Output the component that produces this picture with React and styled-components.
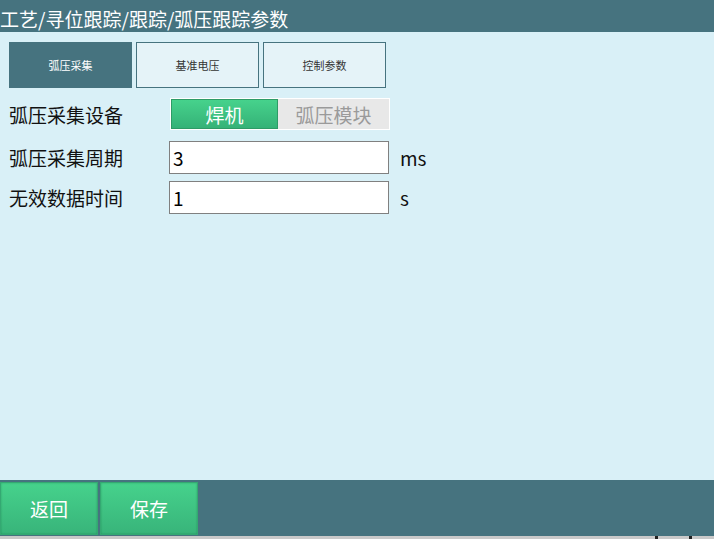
import React from "react";
import styled, { createGlobalStyle } from "styled-components";

const GlobalStyle = createGlobalStyle`
    html, body {
        margin: 0;
        padding: 0;
        background: #d9f0f7;
    }
    body {
        font-family: "Noto Sans CJK SC", "Microsoft YaHei", sans-serif;
    }
`;

const Page = styled.div`
    display: flex;
    flex-direction: column;
    width: 714px;
    height: 539px;
    overflow: hidden;
    background: #d9f0f7;
`;

const Header = styled.div`
    height: 32px;
    flex: none;
    display: flex;
    align-items: center;
    background: #46737f;
    color: #fff;
    font-size: 19px;
    line-height: 1;
    padding-top: 4px;
    box-sizing: border-box;
    white-space: nowrap;
`;

const Main = styled.div`
    flex: 1;
    padding: 10px 9px 0;
`;

const Tabs = styled.div`
    display: flex;
    gap: 4px;
`;

const Tab = styled.div`
    width: 123px;
    height: 46px;
    box-sizing: border-box;
    display: flex;
    align-items: center;
    justify-content: center;
    font-size: 11px;
    background: ${p => (p.active ? "#46737f" : "#e5f3f8")};
    color: ${p => (p.active ? "#fff" : "#333")};
    border: 1px solid #46737f;
`;

const Row = styled.div`
    display: flex;
    align-items: center;
    height: ${p => p.h}px;
    margin-top: ${p => p.top}px;
`;

const Label = styled.div`
    width: 160px;
    flex: none;
    font-size: 19px;
    color: #111;
`;

const Segment = styled.div`
    display: flex;
    width: 220px;
    height: 32px;
    box-sizing: border-box;
    border: 1px solid #fff;
    background: #fff;
    margin-left: 1px;
`;

const SegItem = styled.div`
    flex: ${p => (p.on ? "0 0 107px" : "1")};
    display: flex;
    align-items: center;
    justify-content: center;
    font-size: 19px;
    box-sizing: border-box;
    color: ${p => (p.on ? "#fff" : "#9a9a9a")};
    background: ${p => (p.on ? "linear-gradient(#46d28c, #35b277)" : "#e8e8e8")};
    border: ${p => (p.on ? "1px solid #2e9b66" : "none")};
`;

const Input = styled.div`
    width: 220px;
    height: 33px;
    box-sizing: border-box;
    border: 1px solid #808080;
    background: #fff;
    display: flex;
    align-items: center;
    padding-left: 3px;
    font-size: 19px;
    color: #000;
`;

const Unit = styled.div`
    margin-left: 11px;
    font-size: 19px;
    color: #111;
`;

const Footer = styled.div`
    height: 56px;
    flex: none;
    display: flex;
    gap: 2px;
    padding-top: 2px;
    box-sizing: border-box;
    background: #46737f;
`;

const FootButton = styled.div`
    width: 98px;
    height: 53px;
    box-sizing: border-box;
    display: flex;
    align-items: center;
    justify-content: center;
    color: #fff;
    font-size: 19px;
    background: linear-gradient(#46d28c, #38b47a);
    border: 1px solid #34a872;
    box-shadow: inset 0 0 2px rgba(0, 80, 40, 0.35);
`;

const BottomStrip = styled.div`
    height: 3px;
    flex: none;
    background: #c9c9c9;
    position: relative;
`;

const Mark = styled.span`
    position: absolute;
    top: 0;
    left: ${p => p.x}px;
    width: 3px;
    height: 3px;
    background: #222;
`;

const rows = [
    { label: "弧压采集周期", value: "3", unit: "ms", top: 11 },
    { label: "无效数据时间", value: "1", unit: "s", top: 7 },
];

export default function App() {
    return (
        <Page>
            <GlobalStyle />
            <Header>工艺/寻位跟踪/跟踪/弧压跟踪参数</Header>
            <Main>
                <Tabs>
                    <Tab active>弧压采集</Tab>
                    <Tab>基准电压</Tab>
                    <Tab>控制参数</Tab>
                </Tabs>
                <Row h={32} top={10}>
                    <Label>弧压采集设备</Label>
                    <Segment>
                        <SegItem on>焊机</SegItem>
                        <SegItem>弧压模块</SegItem>
                    </Segment>
                </Row>
                {rows.map(r => (
                    <Row key={r.label} h={33} top={r.top}>
                        <Label>{r.label}</Label>
                        <Input>{r.value}</Input>
                        <Unit>{r.unit}</Unit>
                    </Row>
                ))}
            </Main>
            <Footer>
                <FootButton>返回</FootButton>
                <FootButton>保存</FootButton>
            </Footer>
            <BottomStrip>
                <Mark x={655} />
                <Mark x={689} />
            </BottomStrip>
        </Page>
    );
}
